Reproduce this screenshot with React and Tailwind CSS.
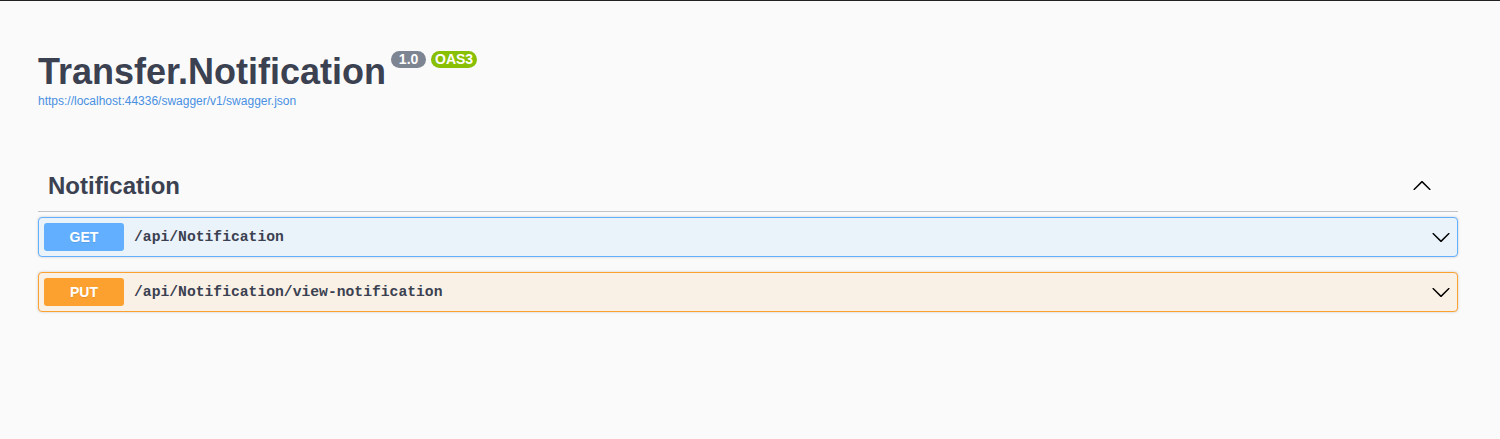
import React from 'react';

const Arrow = ({ up, className }) => (
    <svg viewBox="0 0 20 20" width="20" height="20" className={className}>
        <path
            transform={up ? 'rotate(180 10 10)' : undefined}
            d="M17.418 6.109c.272-.268.709-.268.979 0s.271.701 0 .969l-7.908 7.83c-.27.268-.707.268-.979 0l-7.908-7.83c-.27-.268-.27-.701 0-.969.271-.268.709-.268.979 0L10 13.25l7.418-7.141z"
            fill="currentColor"
        />
    </svg>
);

const ops = [
    {
        method: 'GET',
        path: '/api/Notification',
        box: 'border-[#61affe] bg-[#ebf3fa]',
        badge: 'bg-[#61affe]',
    },
    {
        method: 'PUT',
        path: '/api/Notification/view-notification',
        box: 'border-[#fca130] bg-[#faf1e6]',
        badge: 'bg-[#fca130]',
    },
];

function Operation({ op }) {
    return (
        <div className={`mb-[15px] flex h-[40px] items-center rounded-[4px] border pl-[5px] pr-[6px] shadow-[0_0_3px_rgba(0,0,0,0.19)] ${op.box}`}>
            <span className={`flex h-[28px] w-[80px] items-center justify-center rounded-[3px] text-[14px] font-bold text-white [text-shadow:0_1px_0_rgba(0,0,0,0.1)] ${op.badge}`}>
                {op.method}
            </span>
            <span className="flex-1 px-[10px] pt-[1px] font-['Liberation_Mono',monospace] text-[14.7px] font-bold text-[#3b4151]">
                {op.path}
            </span>
            <Arrow className="text-black" />
        </div>
    );
}

export default function App() {
    return (
        <div className="min-h-[439px] border-t border-[#222] bg-[#fafafa] pl-[38px] pr-[42px] font-['Liberation_Sans',Arial,sans-serif] text-[#3b4151]">
            <div className="pt-[50px]">
                <div className="flex items-start">
                    <h1 className="text-[36px] font-bold leading-[41px]">Transfer.Notification</h1>
                    <span className="ml-[5px] flex h-[17px] w-[35px] items-center justify-center rounded-full bg-[#7d8492] text-[14px] font-bold text-white">
                        1.0
                    </span>
                    <span className="ml-[5px] flex h-[17px] w-[46px] items-center justify-center rounded-full bg-[#89bf04] text-[14px] font-bold text-white">
                        OAS3
                    </span>
                </div>
                <a className="mt-[2px] block text-[12px] leading-[14px] text-[#4990e2]">
                    https://localhost:44336/swagger/v1/swagger.json
                </a>
            </div>

            <div className="mt-[53px]">
                <div className="mb-[5px] flex h-[51px] items-center border-b border-[#c1c3c7] pl-[10px] pr-[26px]">
                    <h3 className="flex-1 text-[24px] font-bold">Notification</h3>
                    <Arrow up className="text-black" />
                </div>
                {ops.map((op) => (
                    <Operation key={op.method} op={op} />
                ))}
            </div>
        </div>
    );
}
